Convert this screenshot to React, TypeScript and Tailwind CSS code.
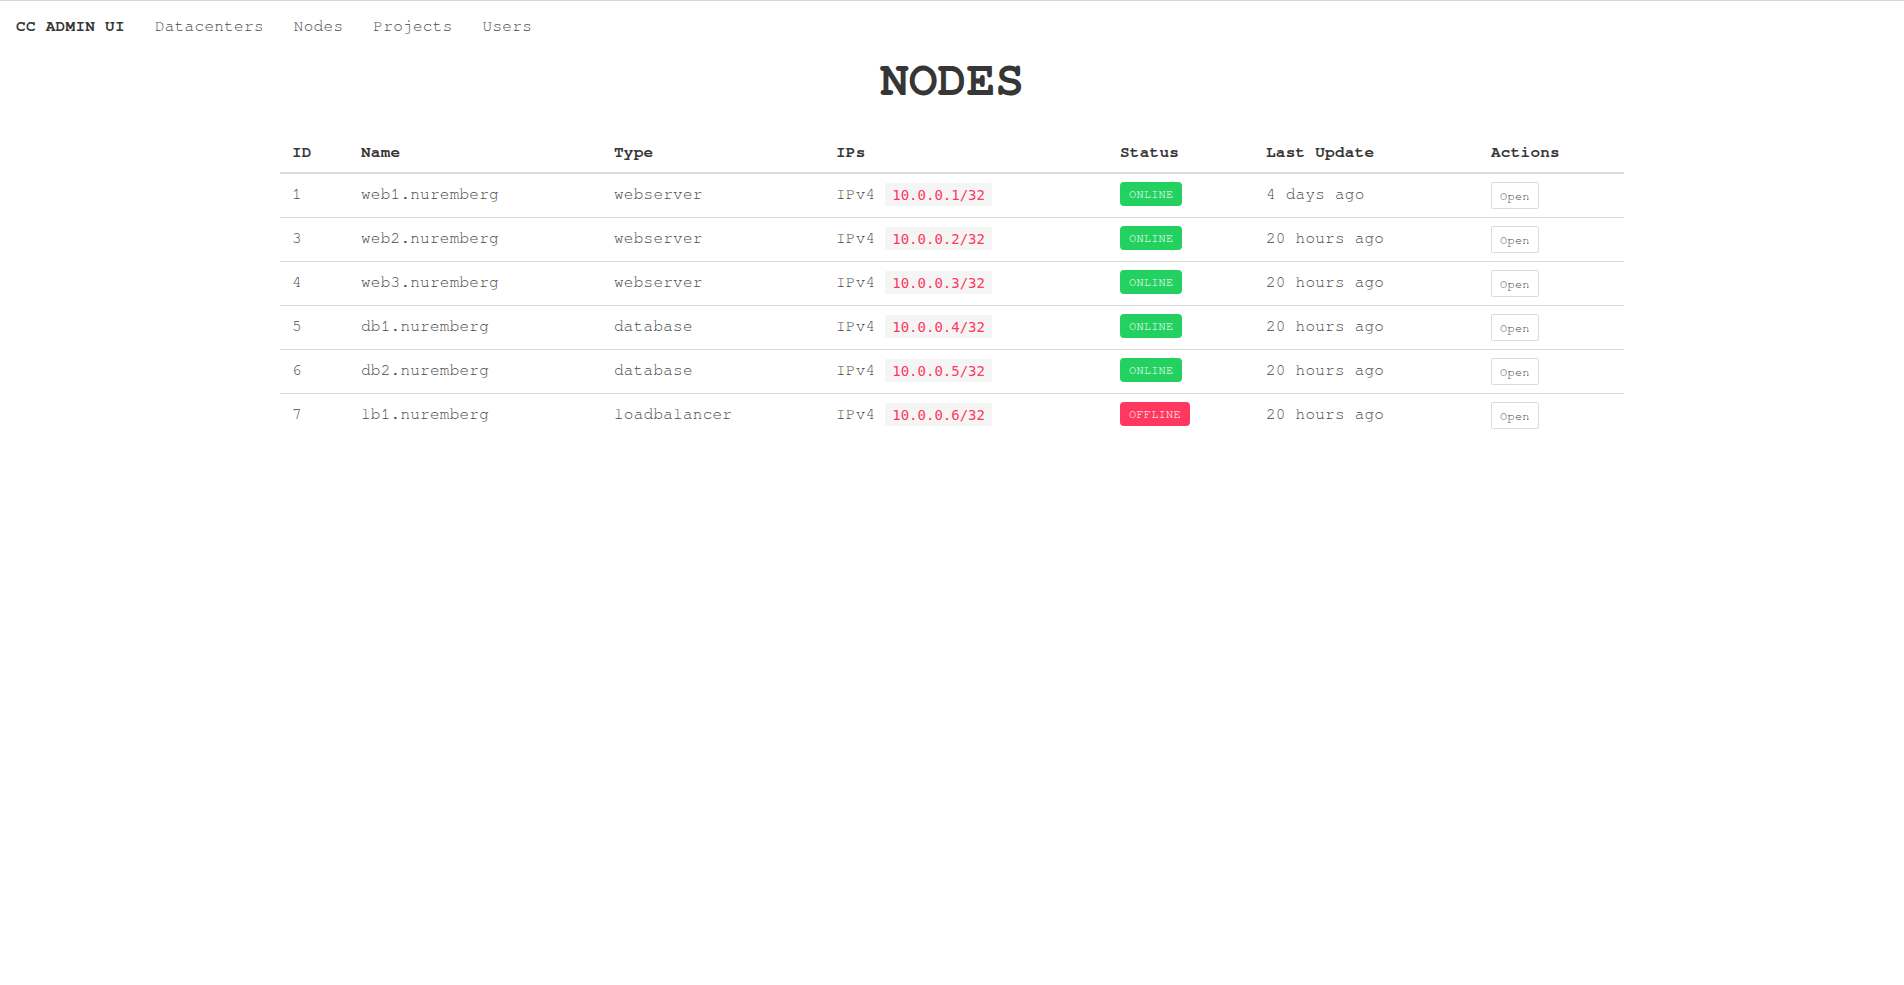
import React from "react";

type Node = {
  id: number;
  name: string;
  type: string;
  ip: string;
  online: boolean;
  updated: string;
};

const NODES: Node[] = [
  { id: 1, name: "web1.nuremberg", type: "webserver", ip: "10.0.0.1/32", online: true, updated: "4 days ago" },
  { id: 3, name: "web2.nuremberg", type: "webserver", ip: "10.0.0.2/32", online: true, updated: "20 hours ago" },
  { id: 4, name: "web3.nuremberg", type: "webserver", ip: "10.0.0.3/32", online: true, updated: "20 hours ago" },
  { id: 5, name: "db1.nuremberg", type: "database", ip: "10.0.0.4/32", online: true, updated: "20 hours ago" },
  { id: 6, name: "db2.nuremberg", type: "database", ip: "10.0.0.5/32", online: true, updated: "20 hours ago" },
  { id: 7, name: "lb1.nuremberg", type: "loadbalancer", ip: "10.0.0.6/32", online: false, updated: "20 hours ago" },
];

const NAV_LINKS = ["Datacenters", "Nodes", "Projects", "Users"];

// column widths, they add up to the 1344px container
const COLS = [69, 253, 222, 284, 146, 225, 145];

const HEADERS = ["ID", "Name", "Type", "IPs", "Status", "Last Update", "Actions"];

function StatusTag({ online }: { online: boolean }) {
  return (
    <span
      className={
        online
          ? "inline-flex h-6 items-center rounded-[4px] bg-[#23d160] px-[9px] align-top text-xs leading-none tracking-[0.2px] text-white"
          : "inline-flex h-6 items-center rounded-[4px] bg-[#ff3860] px-[9px] align-top text-xs leading-none tracking-[0.2px] text-white"
      }
    >
      {online ? "ONLINE" : "OFFLINE"}
    </span>
  );
}

export default function App() {
  return (
    <div className="min-h-screen border-t border-[#d5d5d5] bg-white font-['Nimbus_Mono_PS','FreeMono','Nimbus_Mono_L','Courier','Liberation_Mono',monospace] text-[#4a4a4a]">
      <nav className="flex h-[50px] items-center pl-px text-base tracking-[0.3px]">
        <a className="cursor-pointer px-[15px] font-bold text-[#363636]">CC ADMIN UI</a>
        {NAV_LINKS.map((link) => (
          <a key={link} className="cursor-pointer px-[15px] text-[#4a4a4a]">
            {link}
          </a>
        ))}
      </nav>

      <h1 className="mt-[3px] mb-[24px] text-center text-5xl leading-[54px] font-bold text-[#363636]">
        NODES
      </h1>

      <div className="mx-auto w-[1344px]">
        <table className="w-full table-fixed text-base tracking-[0.25px]">
          <colgroup>
            {COLS.map((w, i) => (
              <col key={i} style={{ width: w }} />
            ))}
          </colgroup>
          <thead>
            <tr>
              {HEADERS.map((h) => (
                <th
                  key={h}
                  className="border-b-2 border-[#dbdbdb] px-3 py-2 text-left align-top leading-6 font-bold text-[#363636]"
                >
                  {h}
                </th>
              ))}
            </tr>
          </thead>
          <tbody>
            {NODES.map((node, i) => {
              const cell =
                i === NODES.length - 1
                  ? "h-[44px] px-3 py-2 align-top leading-6"
                  : "h-[44px] border-b border-[#dbdbdb] px-3 py-2 align-top leading-6";
              return (
                <tr key={node.id}>
                  <td className={cell}>{node.id}</td>
                  <td className={cell}>{node.name}</td>
                  <td className={cell}>{node.type}</td>
                  <td className={cell}>
                    IPv4{" "}
                    <span className="bg-[#f5f5f5] px-[7px] py-[3.5px] font-['DejaVu_Sans_Mono',monospace] text-[14px] tracking-normal text-[#ff3860]">
                      {node.ip}
                    </span>
                  </td>
                  <td className={cell}>
                    <StatusTag online={node.online} />
                  </td>
                  <td className={cell}>{node.updated}</td>
                  <td className={cell}>
                    <button className="inline-flex h-[27px] items-center rounded-[2px] border border-[#dbdbdb] bg-white px-2 align-top text-xs leading-none text-[#4a4a4a]">
                      Open
                    </button>
                  </td>
                </tr>
              );
            })}
          </tbody>
        </table>
      </div>
    </div>
  );
}
